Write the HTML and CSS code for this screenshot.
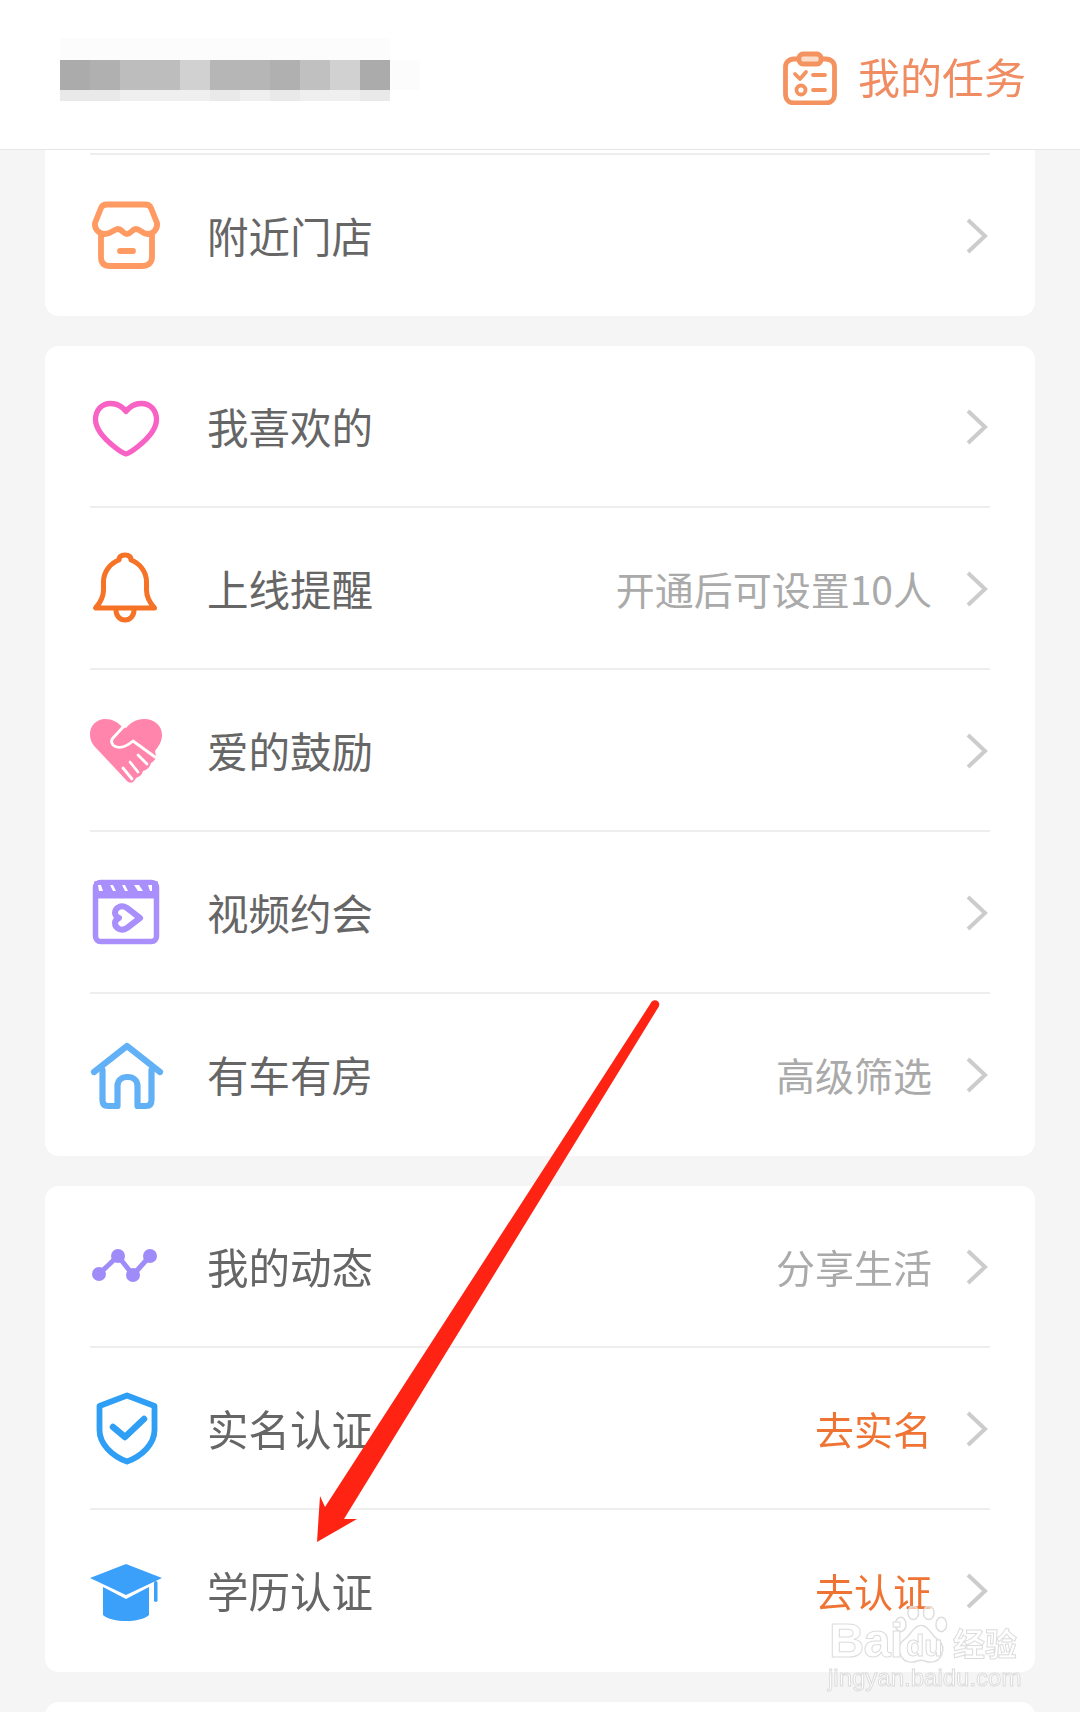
FILE: index.html
```html
<!DOCTYPE html>
<html lang="zh-CN">
<head>
<meta charset="utf-8">
<title>我的</title>
<link rel="stylesheet" href="styles.css">
</head>
<body>
<div class="page">
  <header class="topbar">
    <div class="mosaic" aria-hidden="true">
      <i class="s0"></i><i class="s0"></i><i class="s0"></i><i class="s0"></i><i class="s0"></i><i class="s0"></i><i class="s0"></i><i class="s0"></i><i class="s0"></i><i class="s0"></i><i class="s0"></i><i class="none"></i>
      <i class="s1"></i><i class="s2"></i><i class="s3"></i><i class="s3"></i><i class="s4"></i><i class="s5"></i><i class="s5"></i><i class="s2"></i><i class="s6"></i><i class="s4"></i><i class="s1"></i><i class="s0"></i>
      <i class="s7"></i><i class="s7"></i><i class="s8"></i><i class="s8"></i><i class="s8"></i><i class="s7"></i><i class="s8"></i><i class="s7"></i><i class="s8"></i><i class="s8"></i><i class="s7"></i><i class="none"></i>
    </div>
    <div class="task">
      <svg class="task-icon" viewBox="0 0 54 54" fill="none" stroke="#f4935f" stroke-width="4.800" stroke-linecap="round" stroke-linejoin="round">
        <path d="M16 8 H11 C6 8 2.500 11.500 2.500 16 V43 C2.500 48.500 6 52 11 52 H43 C48 52 51.500 48.500 51.500 43 V16 C51.500 11.500 48 8 43 8 H38"/>
        <rect x="16" y="3" width="22" height="10" rx="4" fill="#fbdccb"/>
        <path d="M12 23 L17 28 L23 21" stroke-width="3.800"/>
        <path d="M30 24 H42 M30 39 H42" stroke-width="3.800"/>
        <circle cx="18" cy="39" r="4.500" stroke-width="3.800"/>
      </svg>
      <span class="task-label">我的任务</span>
    </div>
  </header>

  <main class="list">
    <section class="card card-cut">
      <div class="row row-solo">
        <svg class="icon" viewBox="0 0 72 72" fill="none" stroke="#ff9a63" stroke-width="5.800" stroke-linecap="round" stroke-linejoin="round">
          <g transform="translate(0 -1)">
            <path d="M17 5.500 H55 C58 5.500 60 6.500 61 9 L67 24 C68 30 63 35 58 35 C53 35 50 30 46 30 C42 30 41 35 37 35 C33 35 32 30 28 30 C24 30 21 35 15 35 C9 35 4 30 5 24 L11 9 C12 6.500 14 5.500 17 5.500 Z"/>
            <path d="M11 35 V58 C11 64 14 67 20 67 H52 C58 67 62 64 62 58 V35"/>
            <path d="M30 52 H43"/>
          </g>
        </svg>
        <span class="label">附近门店</span>
        <svg class="chev" viewBox="0 0 22 36" fill="none" stroke="#cccccc" stroke-width="4"><path d="M2 2 L19 18 L2 34"/></svg>
      </div>
    </section>

    <section class="card">
      <div class="row row-first">
        <svg class="icon" viewBox="0 0 72 72" fill="none" stroke="#f862c4" stroke-width="5.300" stroke-linejoin="round">
          <path transform="translate(0 2.500)" d="M36 18 C32 12.500 26 10 20.500 10 C11.500 10 5.500 17 5.500 26 C5.500 36 14 45 24 53 C29 57 33 60 36 60.500 C39 60 43 57 48 53 C58 45 66.500 36 66.500 26 C66.500 17 60.500 10 51.500 10 C46 10 40 12.500 36 18 Z"/>
        </svg>
        <span class="label">我喜欢的</span>
        <svg class="chev" viewBox="0 0 22 36" fill="none" stroke="#cccccc" stroke-width="4"><path d="M2 2 L19 18 L2 34"/></svg>
      </div>
      <div class="row">
        <svg class="icon" viewBox="0 0 72 72" fill="none" stroke="#f57226" stroke-width="5" stroke-linecap="round" stroke-linejoin="round">
          <g transform="translate(0 1)">
            <path d="M5.500 54 H64.500 C60 49 56.500 44 56.500 36 V28 C56.500 17 49 9 41 6 C41 2 38.500 1 35 1 C31.500 1 29 2 29 6 C21 9 13.500 17 13.500 28 V36 C13.500 44 10 49 5.500 54 Z"/>
            <path d="M26 56 C26 62 30 66 35 66 C40 66 44 62 44 56"/>
          </g>
        </svg>
        <span class="label">上线提醒</span>
        <span class="note">开通后可设置10人</span>
        <svg class="chev" viewBox="0 0 22 36" fill="none" stroke="#cccccc" stroke-width="4"><path d="M2 2 L19 18 L2 34"/></svg>
      </div>
      <div class="row">
        <svg class="icon" viewBox="0 0 72 72">
          <g transform="translate(0 1)">
            <path fill="#ff85ad" d="M36 12 C40 7 46 3 54 3 C65 3 72 10 72 19 C72 25 69 30 65 35 L66 40 C66 43 64 45 61 47 C60 51 57 54 53 55 C52 59 49 61 46 62 C44 67 40 68 37 65 L7 33 C3 29 0 25 0 18 C0 10 6 3 15.500 3 C22 3 28 6 32 11 Z"/>
            <g fill="none" stroke="#ffffff" stroke-width="2.800" stroke-linecap="round" stroke-linejoin="round">
              <path d="M35 9 L23 22 C20 25 22 30 27 31 C32 32 36 31 43 25 L65 41"/>
              <path d="M48 39 L57 48 M40 46 L48 56 M33 52 L42 63"/>
            </g>
          </g>
        </svg>
        <span class="label">爱的鼓励</span>
        <svg class="chev" viewBox="0 0 22 36" fill="none" stroke="#cccccc" stroke-width="4"><path d="M2 2 L19 18 L2 34"/></svg>
      </div>
      <div class="row">
        <svg class="icon" viewBox="0 0 72 72" fill="none" stroke="#a98ffb" stroke-width="5.500" stroke-linejoin="round">
          <rect x="5.500" y="5.500" width="61" height="59" rx="5"/>
          <path fill="#a98ffb" d="M5.500 5.500 H66.500 V20 H5.500 Z" stroke-width="3"/>
          <path fill="#ffffff" stroke="none" d="M8 8 H11 L13 14 H9 Z M20 8 H23 L26 14 H23 Z M32 8 H35 L38 14 H35 Z M44 8 H49 L53 14 H48 Z M58 8 H62 V14 H60 Z"/>
          <path stroke-width="6" d="M50 41 L37 31 C31 27 25 31 25 36 C25 38 27 40 29 41 C27 42 25 44 25 46 C25 51 31 55 37 51 Z"/>
        </svg>
        <span class="label">视频约会</span>
        <svg class="chev" viewBox="0 0 22 36" fill="none" stroke="#cccccc" stroke-width="4"><path d="M2 2 L19 18 L2 34"/></svg>
      </div>
      <div class="row row-last">
        <svg class="icon" viewBox="0 0 72 72" fill="none" stroke="#62b0f5" stroke-width="6.200" stroke-linecap="round" stroke-linejoin="round">
          <path d="M4 33 L37 7 L70 33"/>
          <path d="M12.500 31 V61 C12.500 65 14.500 67 18 67 H27.500 V47 C27.500 42 31 38 37.500 38 C44 38 47.500 42 47.500 47 V67 H56 C59.500 67 61.500 65 61.500 61 V31"/>
        </svg>
        <span class="label">有车有房</span>
        <span class="note">高级筛选</span>
        <svg class="chev" viewBox="0 0 22 36" fill="none" stroke="#cccccc" stroke-width="4"><path d="M2 2 L19 18 L2 34"/></svg>
      </div>
    </section>

    <section class="card">
      <div class="row row-first">
        <svg class="icon" viewBox="0 0 72 72" fill="#a08cf8" stroke="#a08cf8" stroke-width="5" stroke-linejoin="round">
          <path fill="none" d="M9 43 L28 25 L43 44 L60 25"/>
          <g stroke="none">
            <circle cx="9" cy="43" r="7"/>
            <circle cx="28" cy="25" r="7"/>
            <circle cx="43" cy="44" r="7"/>
            <circle cx="60" cy="25" r="7"/>
          </g>
        </svg>
        <span class="label">我的动态</span>
        <span class="note">分享生活</span>
        <svg class="chev" viewBox="0 0 22 36" fill="none" stroke="#cccccc" stroke-width="4"><path d="M2 2 L19 18 L2 34"/></svg>
      </div>
      <div class="row">
        <svg class="icon" viewBox="0 0 72 72" fill="none" stroke="#2f9ff6" stroke-width="5.800" stroke-linejoin="round">
          <g transform="translate(0 1)">
            <path d="M37 1.500 L64.500 12 V36 C64.500 50 52 62 37 67.500 C22 62 9.500 50 9.500 36 V12 Z"/>
            <path d="M23 33 L35 43 L54 25" stroke-width="6.500" stroke-linecap="round"/>
          </g>
        </svg>
        <span class="label">实名认证</span>
        <span class="note note-action">去实名</span>
        <svg class="chev" viewBox="0 0 22 36" fill="none" stroke="#cccccc" stroke-width="4"><path d="M2 2 L19 18 L2 34"/></svg>
      </div>
      <div class="row row-last">
        <svg class="icon" viewBox="0 0 72 72" fill="#3aa0fa">
          <path d="M36 9 L72 23 L36 40 L0 23 Z"/>
          <path d="M13 32 L36 44 L59 32 V60 C50 68 22 68 13 60 Z"/>
          <rect x="64" y="26" width="3.500" height="21" rx="1.700"/>
        </svg>
        <span class="label">学历认证</span>
        <span class="note note-action">去认证</span>
        <svg class="chev" viewBox="0 0 22 36" fill="none" stroke="#cccccc" stroke-width="4"><path d="M2 2 L19 18 L2 34"/></svg>
      </div>
    </section>

    <section class="card card-next"></section>
  </main>

  <svg class="arrow" viewBox="0 0 1080 1712" aria-hidden="true">
    <path fill="#ff2314" d="M651.500 1002 L658.500 1007 L344 1519 L357 1519 L317 1542 L320 1496 L325 1507 Z"/>
    <circle cx="655" cy="1004.500" r="4.300" fill="#ff2314"/>
  </svg>

  <div class="mark" aria-hidden="true">
    <svg class="mark-paw" viewBox="0 0 60 62" fill="#ffffff" fill-opacity="0.55" stroke="#dedede" stroke-width="1.500">
      <ellipse cx="9" cy="19" rx="5.500" ry="7.500"/>
      <ellipse cx="22" cy="7" rx="5.500" ry="7"/>
      <ellipse cx="38" cy="7" rx="5.500" ry="7"/>
      <ellipse cx="51" cy="19" rx="5.500" ry="7.500"/>
      <path d="M30 20 C38 20 40 30 49 36 C56 43 52 58 40 58 C34 58 34 56 30 56 C26 56 26 58 20 58 C8 58 4 43 11 36 C20 30 22 20 30 20 Z"/>
    </svg>
    <span class="mark-bai">Bai</span>
    <span class="mark-du">du</span>
    <span class="mark-cn">经验</span>
    <span class="mark-url">jingyan.baidu.com</span>
  </div>
</div>
</body>
</html>
```

FILE: styles.css
```css
* {
  box-sizing: border-box;
}

html,
body {
  margin: 0;
  padding: 0;
}

body {
  background: #f5f5f5;
  font-family: "Noto Sans CJK SC", "Noto Sans", sans-serif;
}

.page {
  position: relative;
  width: 1080px;
  height: 1712px;
  overflow: hidden;
}

.topbar {
  display: flex;
  justify-content: space-between;
  align-items: flex-start;
  height: 150px;
  padding: 38px 54px 0 60px;
  background: #ffffff;
  border-bottom: 1px solid #e6e6e6;
  filter: blur(0.4px);
}

.mosaic {
  display: grid;
  grid-template-columns: repeat(12, 30px);
  grid-template-rows: 22px 30px 11px;
}

.mosaic .s0 { background: #fcfcfc; }
.mosaic .s1 { background: #ababab; }
.mosaic .s2 { background: #b0b0b0; }
.mosaic .s3 { background: #bdbdbd; }
.mosaic .s4 { background: #d1d1d1; }
.mosaic .s5 { background: #b6b6b6; }
.mosaic .s6 { background: #c0c0c0; }
.mosaic .s7 { background: #e9e9e9; }
.mosaic .s8 { background: #efefef; }

.task {
  display: flex;
  align-items: center;
  gap: 20px;
  margin-top: 11px;
}

.task-icon {
  width: 56px;
  height: 54px;
  flex: none;
}

.task-label {
  margin-bottom: 4px;
  font-size: 42px;
  line-height: 54px;
  color: #f08c62;
}

.list {
  display: flex;
  flex-direction: column;
  gap: 30px;
  padding: 0 45px;
  filter: blur(0.4px);
}

.card {
  background: #ffffff;
  border-radius: 14px;
}

.card-cut {
  padding-top: 3px;
  border-radius: 0 0 14px 14px;
}

.card-next {
  height: 60px;
}

.row {
  display: flex;
  align-items: center;
  height: 162px;
  margin: 0 45px;
  padding-top: 2px;
  border-top: 2px solid #eeeeee;
}

.row-first {
  height: 160px;
  padding-top: 0;
  border-top-color: transparent;
}

.row-last {
  height: 164px;
  padding-top: 0;
}

.row-solo {
  height: 163px;
  padding-top: 0;
}

.icon {
  flex: none;
  width: 72px;
  height: 72px;
  overflow: visible;
}

.label {
  margin-left: 45px;
  margin-bottom: 2px;
  font-size: 41.500px;
  line-height: 56px;
  color: #666666;
}

.note {
  margin-left: auto;
  margin-bottom: 2px;
  font-size: 39px;
  line-height: 56px;
  color: #aaaaaa;
}

.note-action {
  color: #ef7433;
}

.chev {
  flex: none;
  width: 22px;
  height: 36px;
  margin-left: 34px;
  margin-right: 2px;
}

.label + .chev {
  margin-left: auto;
}

.arrow {
  position: absolute;
  left: 0;
  top: 0;
  width: 1080px;
  height: 1712px;
  pointer-events: none;
}

.mark {
  position: absolute;
  left: 826px;
  top: 1606px;
  width: 200px;
  height: 90px;
  color: #ffffff;
  -webkit-text-stroke: 1px #dcdcdc;
}

.mark-paw {
  position: absolute;
  left: 66px;
  top: 0;
  width: 58px;
  height: 60px;
}

.mark-bai {
  position: absolute;
  left: 3px;
  top: 8px;
  font-family: "Liberation Sans", sans-serif;
  font-size: 49px;
  line-height: 52px;
  font-weight: 700;
  letter-spacing: -1px;
}

.mark-du {
  position: absolute;
  left: 80px;
  top: 22px;
  font-family: "Liberation Sans", sans-serif;
  font-size: 30px;
  line-height: 36px;
  font-weight: 700;
}

.mark-cn {
  position: absolute;
  left: 127px;
  top: 16px;
  font-size: 32px;
  line-height: 40px;
  font-weight: 700;
}

.mark-url {
  position: absolute;
  left: 2px;
  top: 57px;
  font-family: "Liberation Sans", sans-serif;
  font-size: 24px;
  line-height: 30px;
  white-space: nowrap;
}
```
